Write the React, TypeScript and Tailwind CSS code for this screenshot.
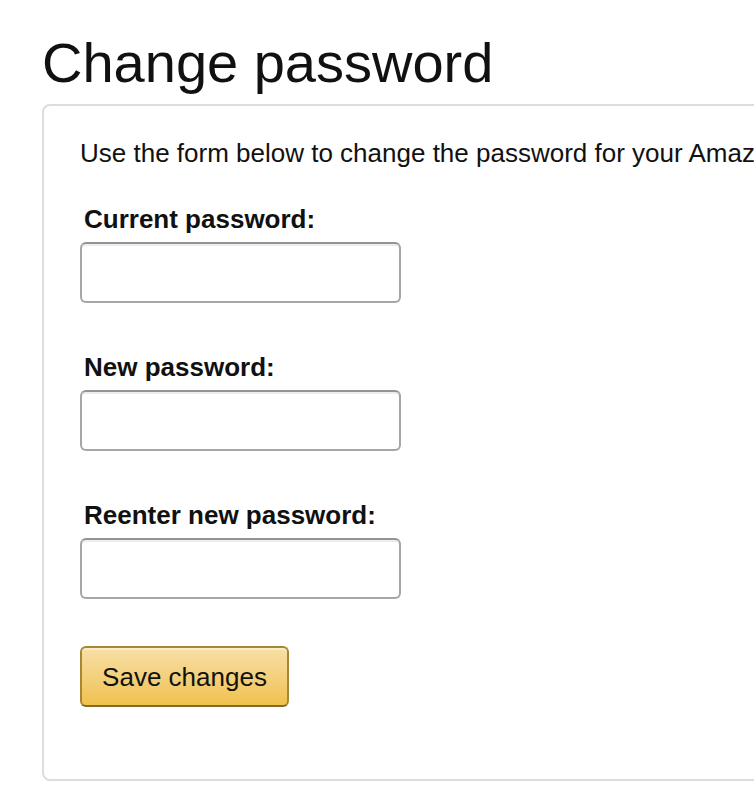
import React from 'react'

const FONT = "font-['Liberation_Sans',Arial,Helvetica,sans-serif]"

function Field({ label, spaced }: { label: string; spaced?: boolean }) {
  return (
    <div className={spaced ? 'mt-[45px]' : ''}>
      <label className="block pl-[4px] pb-[4px] text-[26px] leading-[38px] font-bold text-[#111]">
        {label}
      </label>
      <input
        type="password"
        className="block w-[321px] h-[61px] px-[14px] rounded-[6px] border-2 border-[#a6a6a6] border-t-[#949494] bg-white shadow-[inset_0_2px_0_rgba(0,0,0,0.07)] outline-none"
      />
    </div>
  )
}

export default function App() {
  return (
    <div className={`${FONT} min-h-[810px] w-full overflow-hidden bg-white text-[#111]`}>
      <div className="pl-[40px] pt-[31px]">
        <h1 className="pl-[2px] text-[56px] leading-[64px] font-normal mb-[9px] whitespace-nowrap">
          Change password
        </h1>
        <div className="ml-[2px] w-[1400px] rounded-[8px] border-2 border-[#dddddd] pt-[28px] pl-[36px] pb-[72px]">
          <p className="text-[26px] leading-[38px] whitespace-nowrap mb-[28px]">
            Use the form below to change the password for your Amazon account.
          </p>
          <form onSubmit={e => e.preventDefault()}>
            <Field label="Current password:" />
            <Field label="New password:" spaced />
            <Field label="Reenter new password:" spaced />
            <button
              type="submit"
              className="mt-[47px] block w-[209px] h-[61px] rounded-[6px] border-2 border-[#a88734] border-b-[#846a29] bg-gradient-to-b from-[#f7dfa5] to-[#f0c14b] shadow-[inset_0_2px_0_rgba(255,255,255,0.4)] text-[26px] leading-[38px] text-[#111] text-center"
            >
              Save changes
            </button>
          </form>
        </div>
      </div>
    </div>
  )
}
